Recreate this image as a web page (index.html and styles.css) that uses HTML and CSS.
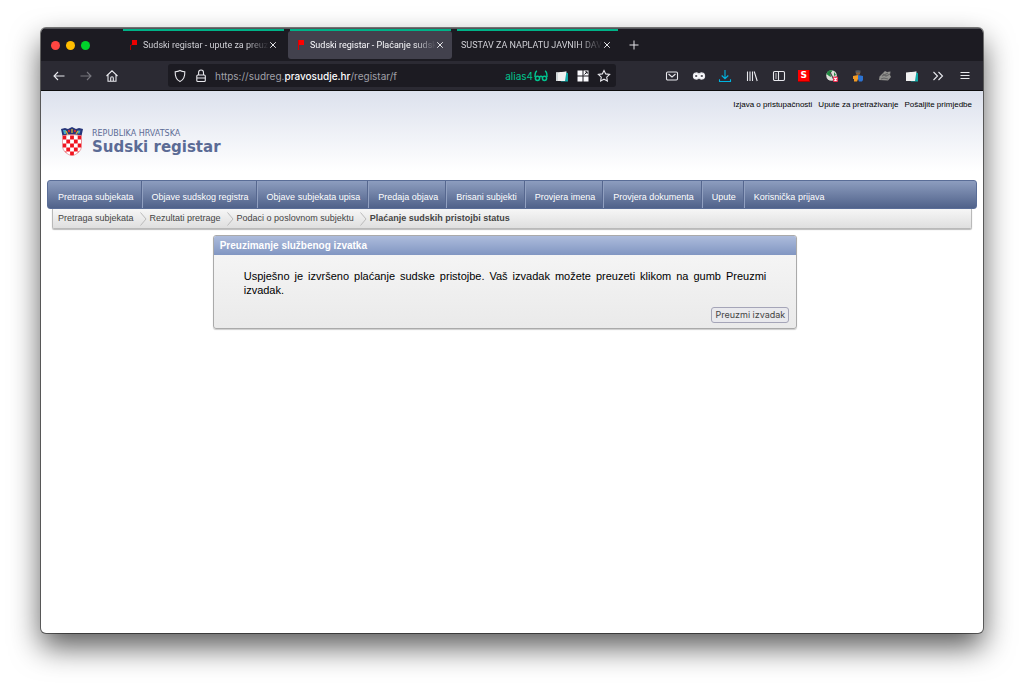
FILE: index.html
```html
<!DOCTYPE html>
<html lang="hr">
<head>
    <meta charset="UTF-8">
    <meta name="viewport" content="width=device-width, initial-scale=1.0">
    <title>Sudski registar - Plaćanje sudskih pristojbi</title>
    <link rel="stylesheet" href="styles.css">
</head>
<body>
<div class="window">
    <div class="tabbar">
        <div class="lights">
            <span class="light red"></span>
            <span class="light yellow"></span>
            <span class="light green"></span>
        </div>
        <div class="tab">
            <svg class="flag" viewBox="0 0 8 12"><path d="M2 1h5v5H2z" fill="#e00"/><path d="M1 6h1M.5 6v5" stroke="#a00" fill="none"/></svg>
            <span class="tab-title">Sudski registar - upute za preuz</span>
            <button class="close" aria-label="Zatvori"><svg viewBox="0 0 8 8"><path d="M1.200 1.200l5.600 5.600M6.800 1.200L1.200 6.800"/></svg></button>
        </div>
        <div class="tab active">
            <svg class="flag" viewBox="0 0 8 12"><path d="M1 1h6v5H1z" fill="#f00"/><path d="M1.500 1v10" stroke="#d00" fill="none"/></svg>
            <span class="tab-title">Sudski registar - Plaćanje sudsk</span>
            <button class="close" aria-label="Zatvori"><svg viewBox="0 0 8 8"><path d="M1.200 1.200l5.600 5.600M6.800 1.200L1.200 6.800"/></svg></button>
        </div>
        <div class="tab">
            <span class="tab-title">SUSTAV ZA NAPLATU JAVNIH DAVA</span>
            <button class="close" aria-label="Zatvori"><svg viewBox="0 0 8 8"><path d="M1.200 1.200l5.600 5.600M6.800 1.200L1.200 6.800"/></svg></button>
        </div>
        <button class="new-tab" aria-label="Nova kartica"><svg viewBox="0 0 10 10"><path d="M5 .5v9M.5 5h9"/></svg></button>
    </div>

    <div class="toolbar">
        <div class="nav-buttons">
            <button class="icon" aria-label="Natrag"><svg viewBox="0 0 14 14"><path d="M12.500 7H2M6 3L2 7l4 4"/></svg></button>
            <button class="icon dim" aria-label="Naprijed"><svg viewBox="0 0 14 14"><path d="M1.500 7H12M8 3l4 4-4 4"/></svg></button>
            <button class="icon" aria-label="Početna"><svg viewBox="0 0 14 14"><path d="M1.500 7L7 1.800 12.500 7M3 6v6.300h8V6M5.700 12V9a1.300 1.300 0 0 1 2.600 0v3"/></svg></button>
        </div>
        <div class="urlbar">
            <svg class="glyph" viewBox="0 0 14 14"><path d="M7 1.500c1.600.9 3.300 1.200 4.800 1.300C12 7.500 10.500 11 7 12.600 3.500 11 2 7.500 2.200 2.800 3.700 2.700 5.400 2.400 7 1.500z"/></svg>
            <svg class="glyph" viewBox="0 0 14 14"><rect x="2.800" y="6" width="8.500" height="6.500" rx="1"/><path d="M4.600 6V3.500a2.400 2.400 0 0 1 4.900 0V6M3 9h8.500"/></svg>
            <span class="url">https://sudreg.<b>pravosudje.hr</b>/registar/f</span>
            <span class="container-name">alias4</span>
            <svg class="glasses" viewBox="0 0 14 14"><path d="M3 2C1 2.500 1 5 1 8M11 2c2 .5 2 3 2 6M5.500 8c.8-1 2.200-1 3 0"/><circle cx="3.500" cy="9.300" r="2.100"/><circle cx="10.500" cy="9.300" r="2.100"/></svg>
            <svg class="glyph solid" viewBox="0 0 14 14"><path d="M3 4l8.500-.6 1.500.8v8.300H6z" fill="#13aaa8"/><path d="M1 3.500L5.500 3c2 .3 4-.3 6-.8L10 12H1z" fill="#f1f1f1"/><path d="M1 3.500h2V12H1z" fill="#cfd6d8"/></svg>
            <svg class="glyph solid" viewBox="0 0 14 14"><path d="M1.500 1.500h5v5h-5zM1.500 7.500h5v5h-5zM7.500 7.500h5v5h-5zM7.500 1.500h5v5h-5z" fill="#fbfbfe"/><path d="M8.500 5.500l2.500-2.500M9.200 2.800h2v2" stroke="#1c1b22" stroke-width="1"/></svg>
            <svg class="glyph star" viewBox="0 0 14 14"><path d="M7 1.400l1.700 3.500 3.900.5-2.900 2.700.7 3.900L7 10.200 3.600 12l.7-3.900-2.900-2.700 3.900-.5z"/></svg>
        </div>
        <div class="extensions">
            <button class="icon" aria-label="Pošta"><svg viewBox="0 0 14 14"><rect x="1.500" y="3" width="11" height="8" rx="1.200"/><path d="M3.500 5L7 8l3.500-3"/></svg></button>
            <button class="icon" aria-label="Maska"><svg viewBox="0 0 14 14"><path d="M7 5.400C5.800 3.400 1.400 3 1.400 7s4.400 3.600 5.600 1.700C8.200 10.600 12.600 11 12.600 7S8.200 3.400 7 5.400z" fill="#fbfbfe"/><path d="M3.200 7h2M8.800 7h2" stroke="#2b2a33" stroke-width="1.500"/></svg></button>
            <button class="icon download" aria-label="Preuzimanja"><svg viewBox="0 0 14 14"><path d="M7 1v8.500M3.700 6.500L7 9.700l3.300-3.200M1.500 10.200v2.300h11v-2.300"/></svg></button>
            <button class="icon" aria-label="Knjižnica"><svg viewBox="0 0 14 14"><path d="M2.500 2.500v9.500M5 2.500v9.500M7.500 2.500v9.500M9.200 2.500l3 9.500"/></svg></button>
            <button class="icon" aria-label="Bočna traka"><svg viewBox="0 0 14 14"><rect x="1.500" y="2.500" width="11" height="9" rx="1.200"/><path d="M6.500 2.500v9M3.200 5h1.600M3.200 7h1.600M3.200 9h1.600"/></svg></button>
            <button class="icon" aria-label="Dodatak S"><span class="s-badge">S</span></button>
            <button class="icon" aria-label="Globus"><svg viewBox="0 0 14 14" class="solid"><circle cx="6.500" cy="6.500" r="5.300" fill="#deded8"/><path d="M1.500 5c1-4 4-4 6-3.500L5.500 4.500 6 8 4 7zM9 3l2 3-2 1z" fill="#218b42"/><path d="M5 3l4 8" stroke="#444"/><rect x="8" y="7.500" width="5" height="5.500" rx="1" fill="#ed3154"/><path d="M9.300 9l2.400 2.500M11.700 9l-2.400 2.500" stroke="#fff"/></svg></button>
            <button class="icon" aria-label="Korisnici"><svg viewBox="0 0 14 14" class="solid"><circle cx="7" cy="3.800" r="2.300" fill="#8a633f"/><path d="M4.500 1.500h5v2h-5z" fill="#4f5962"/><path d="M2 7l5-1v4l-1 2.500H3V10H2z" fill="#f19a25"/><path d="M7 6l5 1v4l-1 1.500H8L7 10z" fill="#2c73d3"/></svg></button>
            <button class="icon" aria-label="Dodatak"><svg viewBox="0 0 14 14" class="solid"><path d="M1 11l.5-3.500L4 5l3-3 2 1 3.500-.5L12 6l1 2-3 3.500z" fill="#92928f"/><path d="M3 10l3-1 4 1M5 5l3 2 4-2M4 7l6-3" stroke="#666" fill="none"/></svg></button>
            <button class="icon" aria-label="Karta"><svg viewBox="0 0 14 14" class="solid"><path d="M3 4l8.500-.6 1.500.8v8.300H6z" fill="#13aaa8"/><path d="M1 3.500L5.500 3c2 .3 4-.3 6-.8L10 12H1z" fill="#f1f1f1"/></svg></button>
            <button class="icon" aria-label="Više"><svg viewBox="0 0 14 14"><path d="M2.500 3l4 4-4 4M7.500 3l4 4-4 4"/></svg></button>
            <button class="icon" aria-label="Izbornik"><svg viewBox="0 0 14 14"><path d="M2.500 3.500h9M2.500 6.500h9M2.500 9.500h9"/></svg></button>
        </div>
    </div>

    <div class="page">
        <header class="header">
            <div class="top-links">
                <a href="#">Izjava o pristupačnosti</a>
                <a href="#">Upute za pretraživanje</a>
                <a href="#">Pošaljite primjedbe</a>
            </div>
            <a href="#" class="brand">
                <svg class="crest" viewBox="0 0 22 29">
                    <path d="M0 2l4-1 3 1 4-2 4 2 3-1 4 1-1.500 7h-19z" fill="#26367a"/>
                    <path d="M2 3h3v4H3zM16.500 3.500h3l-1 3h-2z" fill="#47a8c8"/>
                    <path d="M5 4l2 4M11 2v4M17 4l-2 3" stroke="#d2b633" stroke-width="1.300"/>
                    <circle cx="8" cy="4" r="1.200" fill="#c92d38"/><circle cx="14" cy="4" r="1.200" fill="#c92d38"/>
                    <clipPath id="shield"><path d="M1.500 8.500q9.500-2 19 0V20q-1 6-9.500 9-8.500-3-9.500-9z"/></clipPath>
                    <g clip-path="url(#shield)">
                        <path d="M1 7h20v22H1z" fill="#fff"/>
                        <path d="M1.500 10.500h19M1.500 18.500h19M1.500 26.500h19" stroke="#f01420" stroke-width="4" stroke-dasharray="3.800 3.800"/>
                        <path d="M5.300 14.500h16M5.300 22.500h16" stroke="#f01420" stroke-width="4" stroke-dasharray="3.800 3.800"/>
                    </g>
                    <path d="M1.500 8.500q9.500-2 19 0V20q-1 6-9.500 9-8.500-3-9.500-9z" fill="none" stroke="#e36a70" stroke-width=".6"/>
                </svg>
                <span class="brand-text">
                    <span class="brand-small">REPUBLIKA HRVATSKA</span>
                    <span class="brand-name">Sudski registar</span>
                </span>
            </a>
        </header>

        <nav class="menu">
            <a href="#">Pretraga subjekata</a>
            <a href="#">Objave sudskog registra</a>
            <a href="#">Objave subjekata upisa</a>
            <a href="#">Predaja objava</a>
            <a href="#">Brisani subjekti</a>
            <a href="#">Provjera imena</a>
            <a href="#">Provjera dokumenta</a>
            <a href="#">Upute</a>
            <a href="#">Korisnička prijava</a>
        </nav>

        <div class="breadcrumbs">
            <a href="#">Pretraga subjekata</a>
            <svg class="sep" viewBox="0 0 7 14"><path d="M.5 .5L6 7 .5 13.500"/></svg>
            <a href="#">Rezultati pretrage</a>
            <svg class="sep" viewBox="0 0 7 14"><path d="M.5 .5L6 7 .5 13.500"/></svg>
            <a href="#">Podaci o poslovnom subjektu</a>
            <svg class="sep" viewBox="0 0 7 14"><path d="M.5 .5L6 7 .5 13.500"/></svg>
            <b>Plaćanje sudskih pristojbi status</b>
        </div>

        <main class="content">
            <section class="panel">
                <h1>Preuzimanje službenog izvatka</h1>
                <p>Uspješno je izvršeno plaćanje sudske pristojbe. Vaš izvadak možete preuzeti klikom na gumb Preuzmi izvadak.</p>
                <div class="panel-actions">
                    <button class="submit">Preuzmi izvadak</button>
                </div>
            </section>
        </main>
    </div>
</div>
</body>
</html>
```

FILE: styles.css
```css
* {
    box-sizing: border-box;
}

body {
    margin: 0;
    padding: 28px 41px 55px;
    background: #fff;
    font-family: "Liberation Sans", Arial, sans-serif;
}

a {
    color: inherit;
    text-decoration: none;
}

button {
    margin: 0;
    padding: 0;
    border: none;
    background: none;
    cursor: pointer;
}

svg {
    display: block;
    flex: none;
}

.window {
    display: flex;
    flex-direction: column;
    min-height: calc(100vh - 83px);
    border-radius: 5px;
    background: #fff;
    overflow: hidden;
    box-shadow: 0 0 0 1px rgba(0, 0, 0, 0.5), 0 14px 30px rgba(0, 0, 0, 0.65);
}

/* tabs */
.tabbar {
    display: flex;
    align-items: center;
    gap: 3px;
    height: 33px;
    padding-left: 10px;
    border-top: 1px solid #55555a;
    background: #1c1b22;
    font-family: Roboto, sans-serif;
}

.lights {
    display: flex;
    gap: 6px;
    width: 67px;
}

.light {
    width: 9px;
    height: 9px;
    border-radius: 50%;
}

.red {
    background: #ff4642;
}

.yellow {
    background: #ffbd00;
}

.green {
    background: #00d22b;
}

.tab {
    position: relative;
    display: flex;
    align-items: center;
    width: 164px;
    height: 28px;
    padding: 0 8px 0 6px;
    border-radius: 3px;
    color: #d0d0d6;
    font-size: 9px;
}

.tab::before {
    content: "";
    position: absolute;
    top: -2px;
    left: 2px;
    right: 1px;
    height: 2px;
    background: #00b388;
}

.active {
    background: #42414d;
    color: #fbfbfe;
}

.flag {
    width: 8px;
    height: 12px;
    margin: 0 5px 0 3px;
}

.tab-title {
    flex: 1;
    min-width: 0;
    white-space: nowrap;
    -webkit-mask-image: linear-gradient(to right, #000 82%, transparent);
    mask-image: linear-gradient(to right, #000 82%, transparent);
}

.close svg {
    width: 8px;
    height: 8px;
}

.close svg,
.new-tab svg {
    fill: none;
    stroke: #e4e4e8;
}

.new-tab {
    margin-left: 7px;
}

.new-tab svg {
    width: 10px;
    height: 10px;
}

/* toolbar */
.toolbar {
    display: flex;
    align-items: center;
    height: 30px;
    padding: 0 11px;
    border-bottom: 1px solid #0c0c0d;
    background: #2b2a33;
    font-family: Inter, sans-serif;
}

.nav-buttons {
    display: flex;
    justify-content: space-between;
    width: 67px;
    margin-right: 49px;
}

.icon {
    width: 14px;
    height: 14px;
}

.icon svg,
.glyph,
.glasses {
    width: 14px;
    height: 14px;
    fill: none;
    stroke: #e8e8ed;
    stroke-width: 1.1;
}

.icon .solid,
.solid {
    stroke: none;
}

.dim {
    opacity: 0.4;
}

.download svg {
    stroke: #00b3e0;
}

.urlbar {
    display: flex;
    flex: 1;
    align-items: center;
    gap: 7px;
    height: 23px;
    padding: 0 5px;
    border-radius: 3px;
    background: #1c1b22;
    color: #a0a0a8;
    font-size: 10px;
}

.url {
    flex: 1;
    white-space: nowrap;
}

.url b {
    color: #fbfbfe;
    font-weight: 500;
}

.container-name {
    margin-right: -6px;
    color: #00c48f;
}

.glasses {
    stroke: #00c48f;
    stroke-width: 1.5;
}

.extensions {
    display: flex;
    justify-content: space-between;
    width: 307px;
    margin-left: 49px;
}

.s-badge {
    display: block;
    width: 12px;
    height: 12px;
    border-right: 1px solid #a00;
    border-bottom: 1px solid #a00;
    background: #f00;
    color: #fff;
    font: bold 9px/11px "DejaVu Sans", sans-serif;
}

/* page */
.page {
    flex: 1;
}

.header {
    height: 89px;
    padding: 8px 11px 0 20px;
    background: linear-gradient(#dce1ed, #fff 80px);
}

.top-links {
    display: flex;
    justify-content: flex-end;
    gap: 6px;
    color: #000;
    font-size: 8px;
    line-height: 11px;
}

.brand {
    display: inline-flex;
    gap: 9px;
    margin-top: 17px;
    color: #5b6b95;
    font-family: "DejaVu Sans", Verdana, sans-serif;
}

.crest {
    width: 22px;
    height: 29px;
}

.brand-text {
    display: flex;
    flex-direction: column;
    padding-top: 2px;
}

.brand-small {
    font-size: 8px;
    line-height: 10px;
}

.brand-name {
    font-size: 15px;
    font-weight: bold;
    line-height: 16px;
}

.menu {
    display: flex;
    height: 29px;
    margin: 0 6px;
    border: 1px solid #5a6d97;
    border-radius: 3px;
    background: linear-gradient(#8d9dbf, #50628a);
    color: #fff;
    font-size: 9px;
    line-height: 32px;
}

.menu a {
    padding: 0 7px 0 10px;
    border-right: 1px solid #56678f;
    box-shadow: 1px 0 #91a0c0;
    white-space: nowrap;
}

.menu a:last-child {
    border-right: none;
    box-shadow: none;
}

.breadcrumbs {
    display: flex;
    align-items: center;
    height: 20px;
    margin: 0 11px;
    padding: 0 5px;
    border: 1px solid #b9b9b9;
    border-top: none;
    border-radius: 0 0 2px 2px;
    background: linear-gradient(#f6f6f6, #dfdfdf);
    box-shadow: 0 1px 1px #bbb;
    color: #444;
    font-size: 9px;
    line-height: 16px;
}

.breadcrumbs a,
.breadcrumbs b {
    padding-bottom: 2px;
}

.sep {
    width: 7px;
    height: 14px;
    margin: 0 3px 0 6px;
    fill: none;
    stroke: #bbb;
}

.content {
    padding: 6px 14px 0 0;
}

.panel {
    width: 62%;
    margin: 0 auto;
    border: 1px solid #aaa;
    border-radius: 3px;
    background: linear-gradient(#f7f7f7, #eaeaea);
    box-shadow: 0 1px 1px #ccc;
    width: 63%;
}

.panel h1 {
    margin: 0;
    padding: 0 6px;
    border-radius: 2px 2px 0 0;
    background: linear-gradient(#adbcdc, #8196c2);
    color: #fff;
    font-size: 10px;
    line-height: 19px;
}

.panel p {
    margin: 14px 30px 0;
    color: #000;
    font-size: 11px;
    line-height: 14px;
    text-align: justify;
}

.panel-actions {
    display: flex;
    justify-content: flex-end;
    padding: 10px 7px 5px;
}

.submit {
    height: 16px;
    padding: 0 3px;
    border: 1px solid #a5a5b8;
    border-radius: 3px;
    background: #e9e9ed;
    color: #444;
    font: 9px/14px Inter, sans-serif;
}
```
